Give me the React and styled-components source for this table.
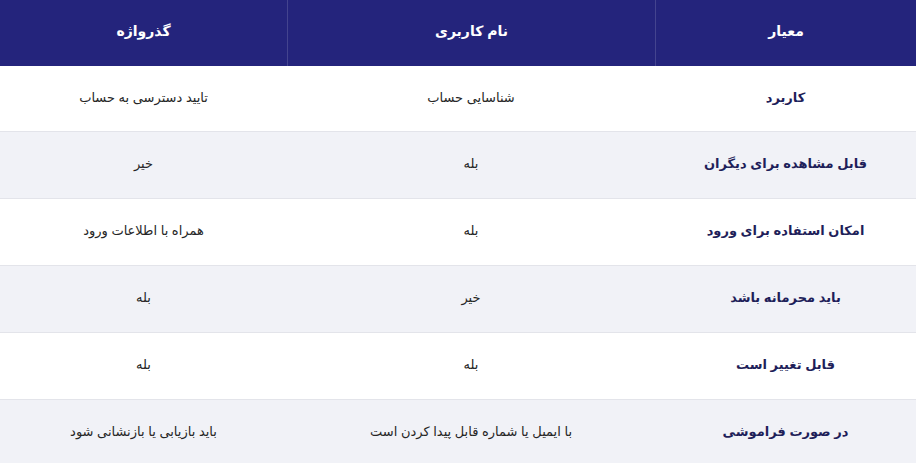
import React from "react";
import styled, { createGlobalStyle } from "styled-components";

const GlobalStyle = createGlobalStyle`
  body {
    margin: 0;
    background: #ffffff;
    font-family: "Liberation Sans", "DejaVu Sans", sans-serif;
  }
`;

const cols = "261px 368px 287px";

const Table = styled.div`
  direction: rtl;
  width: 916px;
  display: flex;
  flex-direction: column;
`;

const HeaderRow = styled.div`
  display: grid;
  grid-template-columns: ${cols};
  height: 66px;
  background: #24247c;
`;

const HeadCell = styled.div`
  display: flex;
  align-items: center;
  justify-content: center;
  padding-bottom: 5px;
  color: #ffffff;
  font-weight: bold;
  font-size: 14px;
  border-left: ${(p) => (p.$last ? "none" : "1px solid rgba(255, 255, 255, 0.15)")};
`;

const Row = styled.div`
  box-sizing: border-box;
  display: grid;
  grid-template-columns: ${cols};
  height: ${(p) => (p.$first ? "65px" : "67px")};
  background: ${(p) => (p.$alt ? "#f1f2f7" : "#ffffff")};
  border-top: ${(p) => (p.$first ? "none" : "1px solid #e3e4ea")};
`;

const Cell = styled.div`
  display: flex;
  align-items: center;
  justify-content: center;
  padding-bottom: 3px;
  font-size: 13px;
  color: ${(p) => (p.$label ? "#1f1f5a" : "#262626")};
  font-weight: ${(p) => (p.$label ? "bold" : "normal")};
`;

const headers = ["معیار", "نام کاربری", "گذرواژه"];

const rows = [
  ["کاربرد", "شناسایی حساب", "تایید دسترسی به حساب"],
  ["قابل مشاهده برای دیگران", "بله", "خیر"],
  ["امکان استفاده برای ورود", "بله", "همراه با اطلاعات ورود"],
  ["باید محرمانه باشد", "خیر", "بله"],
  ["قابل تغییر است", "بله", "بله"],
  ["در صورت فراموشی", "با ایمیل یا شماره قابل پیدا کردن است", "باید بازیابی یا بازنشانی شود"],
];

export default function App() {
  return (
    <>
      <GlobalStyle />
      <Table>
        <HeaderRow>
          {headers.map((h, i) => (
            <HeadCell key={h} $last={i === headers.length - 1}>
              {h}
            </HeadCell>
          ))}
        </HeaderRow>
        {rows.map((r, i) => (
          <Row key={r[0]} $alt={i % 2 === 1} $first={i === 0}>
            <Cell $label>{r[0]}</Cell>
            <Cell>{r[1]}</Cell>
            <Cell>{r[2]}</Cell>
          </Row>
        ))}
      </Table>
    </>
  );
}
